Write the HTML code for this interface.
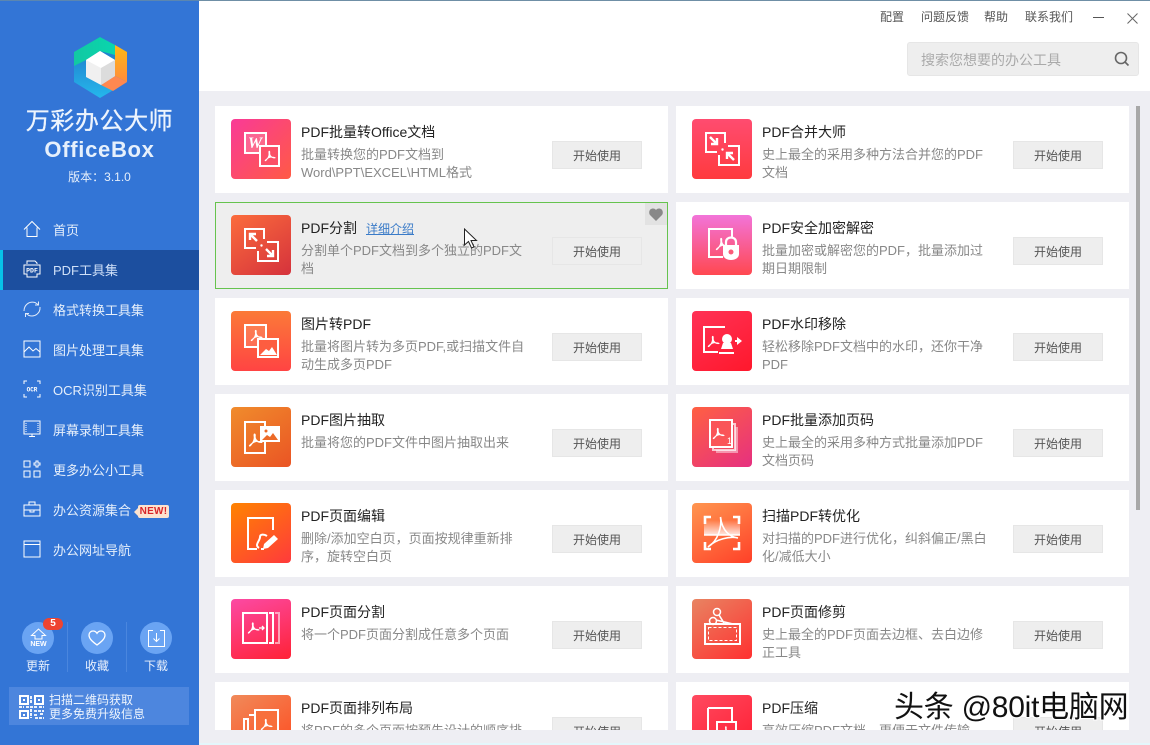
<!DOCTYPE html>
<html lang="zh">
<head>
<meta charset="utf-8">
<title>万彩办公大师 OfficeBox</title>
<style>
*{box-sizing:border-box;margin:0;padding:0}
html,body{width:1150px;height:745px;overflow:hidden;background:#fff;font-family:"Liberation Sans","Noto Sans CJK SC",sans-serif}
.a{position:absolute}
#side{position:absolute;left:0;top:0;width:199px;height:745px;background:#3375d6;color:#fff}
.nav{position:absolute;left:53px;font-size:13px;line-height:20px;color:#e6effb;white-space:nowrap;margin-top:1px}
.ni{position:absolute;left:23px;width:18px;height:18px;overflow:visible;fill:none;stroke:#fff;stroke-width:1}
#main{position:absolute;left:199px;top:91px;width:951px;height:639px;background:#eeeef3;overflow:hidden}
.c{position:absolute;width:453px;height:87px;background:#fff}
.c.h{background:#eee;border:1px solid #66c34e}
.ic{position:absolute;left:16px;top:13px;width:60px;height:60px;border-radius:4px;overflow:hidden}
.h .ic{left:15px;top:12px}
.ic svg{display:block;width:60px;height:60px;fill:none;stroke:#fff;stroke-width:2}
.t{position:absolute;left:86px;top:16px;font-size:14px;line-height:20px;color:#222;white-space:nowrap}
.h .t{left:85px;top:15px}
.d{position:absolute;left:86px;top:40px;width:232px;font-size:13px;line-height:18px;color:#888}
.h .d{left:85px;top:39px}
.b{position:absolute;left:337px;top:35px;width:90px;height:28px;background:#eee;border:1px solid #e6e6e6;font-size:12px;line-height:29px;text-align:center;color:#555}
.h .b{left:336px;top:34px}
.lk{font-size:12px;color:#3a7bc8;text-decoration:underline;margin-left:9px}
.hd{position:absolute;top:9px;font-size:12px;line-height:16px;color:#555;white-space:nowrap}
.fl{fill:#fff;stroke:none}
.lab{position:absolute;top:658px;width:40px;text-align:center;font-size:12px;line-height:16px;color:#e8f0fc}
.circ{position:absolute;top:622px;width:32px;height:32px;border-radius:50%;background:#6aa4f3}
</style>
</head>
<body>
<svg width="0" height="0" style="position:absolute">
<defs>
<symbol id="acro" viewBox="0 0 16 16" overflow="visible"><path d="M7 1C8 1 8.500 2 8.200 4C8 6 9 8 11 9C13 9 15.500 9.200 15.500 10.500C15.500 11.500 12 11.500 9.500 10C7.500 10.300 5.500 11 4.500 12.500C3 15 1.500 15.500 1 14.500C.5 13.500 3 12 4.500 10.500C5.500 9 6.500 6.500 6 4C5.800 2 6 1 7 1Z" fill="#fff" stroke="none"/></symbol>
</defs>
</svg>

<div class="a" style="left:0;top:0;width:1150px;height:1px;background:#6f8fa6"></div>

<div id="side">
  <div class="a" style="left:0;top:0;width:199px;height:1px;background:#5b86b0"></div>
  <svg class="a" style="left:70px;top:34px" width="60" height="68" viewBox="70 34 60 68">
    <defs>
      <linearGradient id="lg1" x1="0" y1="0" x2="0" y2="1"><stop offset="0" stop-color="#1f6ec4"/><stop offset="1" stop-color="#25b8ec"/></linearGradient>
      <linearGradient id="lg2" x1="0" y1="0" x2="0" y2="1"><stop offset="0" stop-color="#ffb914"/><stop offset="1" stop-color="#ff8c3c"/></linearGradient>
      <linearGradient id="lg3" x1="0" y1="0" x2="1" y2="0"><stop offset="0" stop-color="#12c8a2"/><stop offset="1" stop-color="#09d6ae"/></linearGradient>
    </defs>
    <polygon points="74,52 100,37 127,52 127,82 100,98 74,82" fill="url(#lg1)"/>
    <polygon points="74,52 100,37 115,45 115,55 100,51 86,60 74,66" fill="url(#lg3)"/>
    <polygon points="115,45 127,52 127,82 115,76" fill="url(#lg2)"/>
    <polygon points="101,85 115,76 127,82 113,91" fill="#ff8850"/>
    <polygon points="100,51 115,60 115,76 101,85 86,77 86,60" fill="#f0f0f0"/>
    <polygon points="100,51 115,60 101,68 86,60" fill="#fff"/>
    <polygon points="101,68 115,60 115,76 101,85" fill="#dcdcdc"/>
  </svg>
  <div class="a" style="left:0;top:106px;width:199px;text-align:center;font-size:24px;line-height:32px;letter-spacing:.6px;color:#edf4fd;-webkit-text-stroke:.3px #edf4fd">万彩办公大师</div>
  <div class="a" style="left:0;top:136px;width:199px;text-align:center;font-size:22px;line-height:28px;letter-spacing:.7px;color:#e6f0fc;font-weight:bold">OfficeBox</div>
  <div class="a" style="left:0;top:169px;width:199px;text-align:center;font-size:12px;line-height:16px;color:#e6effb">版本：3.1.0</div>

  <div class="a" style="left:0;top:250px;width:199px;height:40px;background:#1c4f9f"></div>
  <div class="a" style="left:0;top:250px;width:3px;height:40px;background:#07c3e8"></div>

  <svg class="ni" style="top:220px" viewBox="0 0 18 18"><path d="M1 9.500L9 1.500L17 9.500M4 7.500V16.500H14V7.500"/></svg>
  <div class="nav" style="top:220px">首页</div>
  <svg class="ni" style="top:260px" viewBox="0 0 18 18"><path d="M4 4V1H12L14 3V4M1 5H17V14H14V17H4V14H1Z"/><text x="9" y="12.500" font-size="6.500" font-weight="bold" text-anchor="middle" fill="#fff" stroke="none" font-family="Liberation Mono">PDF</text></svg>
  <div class="nav" style="top:260px;color:#cfe0f8">PDF工具集</div>
  <svg class="ni" style="top:300px" viewBox="0 0 18 18"><path d="M1 11C1 5 6 1 12 2.500L15 4.500M17 7C17.500 13 12 17.500 6 15.500L3 13.500M15.500 1.500V5H12M2.500 17V13.500H6" opacity=".85"/></svg>
  <div class="nav" style="top:300px">格式转换工具集</div>
  <svg class="ni" style="top:340px" viewBox="0 0 18 18"><path d="M1 1H17V17H1ZM1 12L6 7L10 11L13 8.500L17 12"/></svg>
  <div class="nav" style="top:340px">图片处理工具集</div>
  <svg class="ni" style="top:380px" viewBox="0 0 18 18"><path d="M1 4V1H4M14 1H17V4M1 14V17H4M14 17H17V14"/><text x="9" y="11.500" font-size="6" font-weight="bold" text-anchor="middle" fill="#fff" stroke="none" font-family="Liberation Mono">OCR</text></svg>
  <div class="nav" style="top:380px">OCR识别工具集</div>
  <svg class="ni" style="top:420px" viewBox="0 0 18 18"><path d="M1 1H17V14H1ZM6 16.500H12M9 14V16.500"/><path d="M3 3V12M15 3V12" stroke-dasharray="1 1"/></svg>
  <div class="nav" style="top:420px">屏幕录制工具集</div>
  <svg class="ni" style="top:460px" viewBox="0 0 18 18"><path d="M1 1H7V7H1ZM1 11H7V17H1ZM11 11H17V17H11ZM13 1H15V3H17V5H15V7H13V5H11V3H13Z"/></svg>
  <div class="nav" style="top:460px">更多办公小工具</div>
  <svg class="ni" style="top:500px" viewBox="0 0 18 18"><path d="M1 5H17V16H1ZM6 5V2H12V5M1 10H17M7 10V12H11V10"/></svg>
  <div class="nav" style="top:500px">办公资源集合</div>
  <div class="a" style="left:138px;top:505px;width:31px;height:13px;background:#fde3cf;border-radius:2px;color:#d9262a;font-size:10px;font-weight:bold;line-height:13px;text-align:center;letter-spacing:.3px">NEW!</div>
  <div class="a" style="left:134px;top:508px;width:0;height:0;border:4px solid transparent;border-left:0;border-right-color:#fde3cf"></div>
  <svg class="ni" style="top:540px" viewBox="0 0 18 18"><path d="M1 1H17V17H1ZM1 4.500H17"/></svg>
  <div class="nav" style="top:540px">办公网址导航</div>

  <div class="circ" style="left:22px"></div>
  <div class="circ" style="left:81px"></div>
  <div class="circ" style="left:140px"></div>
  <svg class="a" style="left:30px;top:628px" width="17" height="20" viewBox="0 0 17 20" fill="none" stroke="#fff"><path d="M1.500 7.500L8.500 1L15.500 7.500H12V11H5V7.500Z"/></svg>
  <div class="a" style="left:30px;top:641px;width:17px;font-size:7px;font-weight:bold;line-height:8px;text-align:center;color:#fff">NEW</div>
  <div class="a" style="left:43px;top:618px;width:20px;height:12px;border-radius:6px;background:#ee4430;color:#fff;font-size:10px;font-weight:bold;line-height:12px;text-align:center">5</div>
  <svg class="a" style="left:88px;top:630px" width="18" height="16" viewBox="0 0 18 16" fill="none" stroke="#fff" stroke-width="1.300"><path d="M9 15C5 12 1 9 1 5C1 2.500 3 1 5 1C6.800 1 8.200 2 9 3.300C9.800 2 11.200 1 13 1C15 1 17 2.500 17 5C17 9 13 12 9 15Z"/></svg>
  <svg class="a" style="left:148px;top:630px" width="17" height="17" viewBox="0 0 17 17" fill="none" stroke="#fff"><path d="M5 .5H.5V16.500H16.500V.5H12M8.500 3V11M5.500 8.500L8.500 11.500L11.500 8.500"/></svg>
  <div class="lab" style="left:18px">更新</div>
  <div class="lab" style="left:77px">收藏</div>
  <div class="lab" style="left:136px">下载</div>
  <div class="a" style="left:67px;top:622px;width:1px;height:50px;background:#4a86de"></div>
  <div class="a" style="left:126px;top:622px;width:1px;height:50px;background:#4a86de"></div>

  <div class="a" style="left:9px;top:687px;width:180px;height:38px;background:#4d86de"></div>
  <svg class="a" style="left:19px;top:695px" width="25" height="24" viewBox="0 0 25 24" fill="none" stroke="#fff" stroke-width="2"><path d="M1 1H9V9H1ZM16 1H24V9H16ZM1 16H9V23H1Z"/><path d="M4 4H6V6H4ZM19 4H21V6H19ZM4 19H6V21H4Z" fill="#fff" stroke="none"/><path d="M12 1V8M0 12H5M7 12H18M20 12H25M12 14V23M15 16H25M15 20H19M21 19H25M16 23H25" stroke-width="1.800" stroke-dasharray="3 1"/></svg>
  <div class="a" style="left:49px;top:693px;font-size:12px;line-height:14px;color:#edf4fd;white-space:nowrap">扫描二维码获取<br>更多免费升级信息</div>
</div>

<div class="hd" style="left:880px">配置</div>
<div class="hd" style="left:921px">问题反馈</div>
<div class="hd" style="left:984px">帮助</div>
<div class="hd" style="left:1025px">联系我们</div>
<div class="a" style="left:1093px;top:17px;width:11px;height:1px;background:#555"></div>
<svg class="a" style="left:1127px;top:13px" width="11" height="11" viewBox="0 0 11 11" stroke="#666" fill="none"><path d="M.5 .5L10.500 10.500M10.500 .5L.5 10.500"/></svg>
<div class="a" style="left:907px;top:42px;width:232px;height:34px;background:#eee;border:1px solid #e6e6e6;border-radius:3px"></div>
<div class="a" style="left:921px;top:50px;font-size:14px;line-height:20px;color:#aaa;white-space:nowrap">搜索您想要的办公工具</div>
<svg class="a" style="left:1114px;top:51px" width="16" height="16" viewBox="0 0 16 16" fill="none" stroke="#666" stroke-width="1.600"><circle cx="7" cy="7" r="5.500"/><path d="M11 11L14.500 14.500"/></svg>

<div id="main">
<div class="a" style="left:937px;top:15px;width:4px;height:404px;background:#a8a8a8"></div>

<!-- left column -->
<div class="c" style="left:16px;top:15px">
  <div class="ic" style="background:linear-gradient(135deg,#f93a97,#ff5a45)"><svg viewBox="0 0 60 60"><rect x="14" y="14" width="21" height="20" fill="rgba(255,255,255,.18)"/><text x="24" y="29" font-family="Liberation Serif" font-style="italic" font-weight="bold" font-size="16" text-anchor="middle" fill="#fff" stroke="none">W</text><rect x="29" y="27" width="19" height="20" fill="#fb5067"/><use href="#acro" x="33" y="31" width="12" height="12"/></svg></div>
  <div class="t">PDF批量转Office文档</div><div class="d">批量转换您的PDF文档到<br>Word\PPT\EXCEL\HTML格式</div><div class="b">开始使用</div>
</div>
<div class="c h" style="left:16px;top:111px">
  <div class="ic" style="background:linear-gradient(145deg,#fb6c3c,#d5323c)"><svg viewBox="0 0 60 60"><path d="M33 24V14H14V33H25"/><path d="M36 27H47V46H27V36"/><path d="M19 19L26 26M19 25V19H25M42 41L35 34M42 35V41H36" stroke-width="2.400"/><circle class="fl" cx="30.500" cy="30.500" r="1.200"/></svg></div>
  <div class="t">PDF分割<span class="lk">详细介绍</span></div><div class="d">分割单个PDF文档到多个独立的PDF文档</div><div class="b">开始使用</div>
  <div class="a" style="right:0;top:0;width:22px;height:22px;background:#e2e2e2"></div>
  <svg class="a" style="right:4px;top:5px" width="14" height="13" viewBox="0 0 14 13"><path d="M7 13L1 7C-.5 5 0 1 3.500 .5C5 .3 6.300 1 7 2C7.700 1 9 .3 10.500 .5C14 1 14.500 5 13 7Z" fill="#888"/></svg>
</div>
<div class="c" style="left:16px;top:207px">
  <div class="ic" style="background:linear-gradient(180deg,#fb7a38,#ff4443)"><svg viewBox="0 0 60 60"><rect x="14" y="14" width="21" height="22" fill="rgba(255,255,255,.12)"/><use href="#acro" x="19" y="18" width="13" height="13"/><rect x="27" y="28" width="20" height="18" fill="#fd5d40"/><path class="fl" d="M29 44L35 38L38 40L41 36L46 44Z"/></svg></div>
  <div class="t">图片转PDF</div><div class="d">批量将图片转为多页PDF,或扫描文件自动生成多页PDF</div><div class="b">开始使用</div>
</div>
<div class="c" style="left:16px;top:303px">
  <div class="ic" style="background:linear-gradient(145deg,#f08c2c,#ea5424)"><svg viewBox="0 0 60 60"><path d="M14 15H34V46H14Z"/><use href="#acro" x="17" y="24" width="15" height="18"/><rect x="29" y="19" width="20" height="16" fill="#fff" stroke="none"/><path d="M31 33L36 28L39 30L42 26L47 33Z" fill="#ec6a28" stroke="none"/><circle cx="35" cy="24" r="1.500" fill="#ec6a28" stroke="none"/></svg></div>
  <div class="t">PDF图片抽取</div><div class="d">批量将您的PDF文件中图片抽取出来</div><div class="b">开始使用</div>
</div>
<div class="c" style="left:16px;top:399px">
  <div class="ic" style="background:linear-gradient(145deg,#ff8300,#ff3a3c)"><svg viewBox="0 0 60 60"><path d="M42 27V15H17V46H26M30 46H33"/><path d="M28 45C23 42 29 38 29 34C29 31 33 31 36 33" stroke-width="2"/><path class="fl" d="M32 46L33 41L43 32L47 36L37 45Z"/></svg></div>
  <div class="t">PDF页面编辑</div><div class="d">删除/添加空白页，页面按规律重新排序，旋转空白页</div><div class="b">开始使用</div>
</div>
<div class="c" style="left:16px;top:495px">
  <div class="ic" style="background:linear-gradient(160deg,#fc4aa4,#ff2236)"><svg viewBox="0 0 60 60"><rect x="12" y="14" width="24" height="30"/><use href="#acro" x="16" y="21" width="13" height="16"/><path d="M28 29H33M31 27L33 29L31 31" stroke-width="1.300"/><path d="M38 14H42V44H38"/><path d="M44 14H48V44H44" stroke="rgba(255,255,255,.55)"/></svg></div>
  <div class="t">PDF页面分割</div><div class="d">将一个PDF页面分割成任意多个页面</div><div class="b">开始使用</div>
</div>
<div class="c" style="left:16px;top:591px">
  <div class="ic" style="background:linear-gradient(145deg,#f08a5a,#ff4a1e)"><svg viewBox="0 0 60 60"><path d="M13 24H17V48H13Z"/><path d="M18 20H23"/><rect x="24" y="15" width="23" height="30" fill="#f8703c"/><use href="#acro" x="29" y="22" width="13" height="15"/></svg></div>
  <div class="t">PDF页面排列布局</div><div class="d">将PDF的多个页面按预先设计的顺序排列，方便阅读与打印</div><div class="b">开始使用</div>
</div>

<!-- right column -->
<div class="c" style="left:477px;top:15px">
  <div class="ic" style="background:linear-gradient(180deg,#ff4c70,#ff3a3e)"><svg viewBox="0 0 60 60"><path d="M33 24V14H14V33H25"/><path d="M36 27H47V46H27V36"/><path d="M18 18L25 25M25 19V25H19M42 41L35 34M35 40V34H41" stroke-width="2.400"/><circle class="fl" cx="30.500" cy="30.500" r="1.200"/></svg></div>
  <div class="t">PDF合并大师</div><div class="d">史上最全的采用多种方法合并您的PDF文档</div><div class="b">开始使用</div>
</div>
<div class="c" style="left:477px;top:111px">
  <div class="ic" style="background:linear-gradient(180deg,#f274d9,#ff4850)"><svg viewBox="0 0 60 60"><path d="M40 22V14H17V42H31"/><use href="#acro" x="23" y="21" width="14" height="16"/><path d="M34 30V27C34 21 44 21 44 27V30" stroke-width="2.200"/><path class="fl" d="M31 30H47V39C47 47 31 47 31 39Z"/><circle cx="39" cy="37" r="2.500" fill="#fb5a78" stroke="none"/></svg></div>
  <div class="t">PDF安全加密解密</div><div class="d">批量加密或解密您的PDF，批量添加过期日期限制</div><div class="b">开始使用</div>
</div>
<div class="c" style="left:477px;top:207px">
  <div class="ic" style="background:linear-gradient(150deg,#ff3256,#ff182c)"><svg viewBox="0 0 60 60"><path d="M33 16H12V41H26"/><use href="#acro" x="15" y="24" width="13" height="13"/><circle class="fl" cx="35" cy="28" r="5"/><path class="fl" d="M31 32H39L41 38H29Z"/><path d="M27 42H42"/><path d="M43 30H47" stroke-width="2"/><path class="fl" d="M45 26L50 30L45 34Z"/></svg></div>
  <div class="t">PDF水印移除</div><div class="d">轻松移除PDF文档中的水印，还你干净PDF</div><div class="b">开始使用</div>
</div>
<div class="c" style="left:477px;top:303px">
  <div class="ic" style="background:linear-gradient(145deg,#ff6042,#e63080)"><svg viewBox="0 0 60 60"><rect x="24" y="20" width="22" height="26" fill="rgba(255,255,255,.45)" stroke="none"/><rect x="21" y="17" width="22" height="26" fill="#f24a62" stroke="rgba(255,255,255,.7)"/><rect x="18" y="13" width="22" height="27" fill="#fa5558"/><use href="#acro" x="20" y="18" width="13" height="17"/><text x="35" y="37" font-size="9" fill="#fff" stroke="none" font-family="Liberation Sans">1</text></svg></div>
  <div class="t">PDF批量添加页码</div><div class="d">史上最全的采用多种方式批量添加PDF文档页码</div><div class="b">开始使用</div>
</div>
<div class="c" style="left:477px;top:399px">
  <div class="ic" style="background:linear-gradient(150deg,#ff9650,#ff4028)"><svg viewBox="0 0 60 60"><defs><linearGradient id="sc" x1="0" y1="0" x2="0" y2="1"><stop offset="0" stop-color="#fff" stop-opacity="0"/><stop offset="1" stop-color="#fff" stop-opacity=".85"/></linearGradient></defs><rect x="12" y="17" width="36" height="15" fill="url(#sc)" stroke="none"/><path d="M12 32H48" stroke-width="1.500"/><path d="M13 21V14H19M41 14H47V21M13 39V46H19M41 46H47V39" stroke-width="2.600"/><path d="M16 44C26 38 30 24 28.500 14C30 28 38 34 46 35C38 33 24 36 16 44Z" stroke-width="1.600"/></svg></div>
  <div class="t">扫描PDF转优化</div><div class="d">对扫描的PDF进行优化，纠斜偏正/黑白化/减低大小</div><div class="b">开始使用</div>
</div>
<div class="c" style="left:477px;top:495px">
  <div class="ic" style="background:linear-gradient(145deg,#e88462,#ff3030)"><svg viewBox="0 0 60 60"><rect x="13" y="25" width="35" height="20"/><rect x="16.500" y="28.500" width="28" height="13" stroke-width="1" stroke-dasharray="3 2"/><circle cx="25" cy="13" r="3.500" stroke-width="1.500"/><circle cx="21" cy="22" r="3.500" stroke-width="1.500"/><path d="M27 16L32 24M24 21L41 25" stroke-width="1.600"/></svg></div>
  <div class="t">PDF页面修剪</div><div class="d">史上最全的PDF页面去边框、去白边修正工具</div><div class="b">开始使用</div>
</div>
<div class="c" style="left:477px;top:591px">
  <div class="ic" style="background:linear-gradient(145deg,#ff4a60,#ff1c30)"><svg viewBox="0 0 60 60"><path d="M16 13H40V26M16 13V46H26"/><rect x="25" y="27" width="19" height="20" fill="#ff3048"/><use href="#acro" x="29" y="30" width="11" height="12"/></svg></div>
  <div class="t">PDF压缩</div><div class="d">高效压缩PDF文档，更便于文件传输</div><div class="b">开始使用</div>
</div>
</div>

<div class="a" style="left:199px;top:730px;width:951px;height:13px;background:#eeeef3"></div>
<div class="a" style="left:199px;top:743px;width:951px;height:2px;background:#e4f6fb"></div>

<svg class="a" style="left:463px;top:228px" width="16" height="22" viewBox="0 0 16 22"><path d="M1.500 1V17L5.500 13.500L8.500 20L11 19L8 12.500H13.500Z" fill="#fff" stroke="#222" stroke-width="1"/></svg>

<div class="a" style="left:894px;top:689px;font-size:30px;line-height:38px;letter-spacing:-.25px;color:#111;white-space:nowrap;text-shadow:1px 1px 0 #fff,-1px -1px 0 #fff,1px -1px 0 #fff,-1px 1px 0 #fff">头条 @80it电脑网</div>

</body>
</html>
